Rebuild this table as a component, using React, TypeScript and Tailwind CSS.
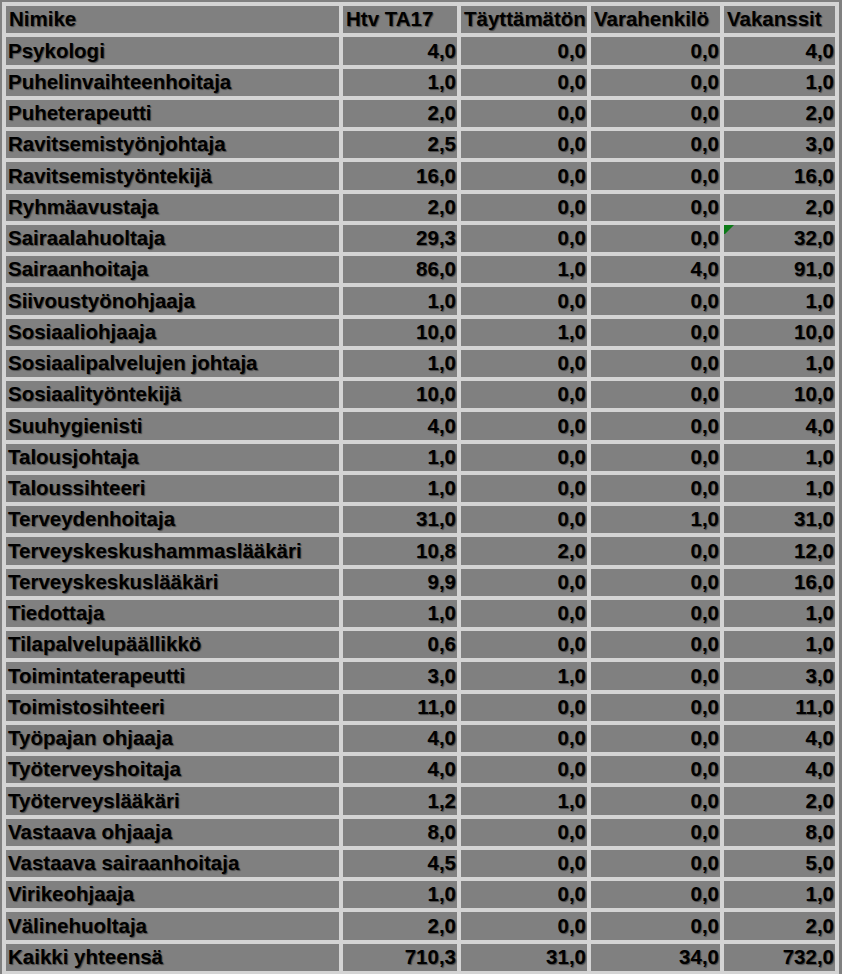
const header = ['Nimike', 'Htv TA17', 'Täyttämätön', 'Varahenkilö', 'Vakanssit'];

const rows: [string, string, string, string, string][] = [
  ['Psykologi', '4,0', '0,0', '0,0', '4,0'],
  ['Puhelinvaihteenhoitaja', '1,0', '0,0', '0,0', '1,0'],
  ['Puheterapeutti', '2,0', '0,0', '0,0', '2,0'],
  ['Ravitsemistyönjohtaja', '2,5', '0,0', '0,0', '3,0'],
  ['Ravitsemistyöntekijä', '16,0', '0,0', '0,0', '16,0'],
  ['Ryhmäavustaja', '2,0', '0,0', '0,0', '2,0'],
  ['Sairaalahuoltaja', '29,3', '0,0', '0,0', '32,0'],
  ['Sairaanhoitaja', '86,0', '1,0', '4,0', '91,0'],
  ['Siivoustyönohjaaja', '1,0', '0,0', '0,0', '1,0'],
  ['Sosiaaliohjaaja', '10,0', '1,0', '0,0', '10,0'],
  ['Sosiaalipalvelujen johtaja', '1,0', '0,0', '0,0', '1,0'],
  ['Sosiaalityöntekijä', '10,0', '0,0', '0,0', '10,0'],
  ['Suuhygienisti', '4,0', '0,0', '0,0', '4,0'],
  ['Talousjohtaja', '1,0', '0,0', '0,0', '1,0'],
  ['Taloussihteeri', '1,0', '0,0', '0,0', '1,0'],
  ['Terveydenhoitaja', '31,0', '0,0', '1,0', '31,0'],
  ['Terveyskeskushammaslääkäri', '10,8', '2,0', '0,0', '12,0'],
  ['Terveyskeskuslääkäri', '9,9', '0,0', '0,0', '16,0'],
  ['Tiedottaja', '1,0', '0,0', '0,0', '1,0'],
  ['Tilapalvelupäällikkö', '0,6', '0,0', '0,0', '1,0'],
  ['Toimintaterapeutti', '3,0', '1,0', '0,0', '3,0'],
  ['Toimistosihteeri', '11,0', '0,0', '0,0', '11,0'],
  ['Työpajan ohjaaja', '4,0', '0,0', '0,0', '4,0'],
  ['Työterveyshoitaja', '4,0', '0,0', '0,0', '4,0'],
  ['Työterveyslääkäri', '1,2', '1,0', '0,0', '2,0'],
  ['Vastaava ohjaaja', '8,0', '0,0', '0,0', '8,0'],
  ['Vastaava sairaanhoitaja', '4,5', '0,0', '0,0', '5,0'],
  ['Virikeohjaaja', '1,0', '0,0', '0,0', '1,0'],
  ['Välinehuoltaja', '2,0', '0,0', '0,0', '2,0'],
  ['Kaikki yhteensä', '710,3', '31,0', '34,0', '732,0'],
];

const cell =
  "relative flex items-center whitespace-nowrap bg-[#808080] h-[27.25px] text-[20.5px] font-bold text-black [text-shadow:1px_1px_1px_rgba(0,0,0,0.45)]";

export default function App() {
  return (
    <div
      className="h-[974px] w-[842px] overflow-hidden bg-[#808080] pl-[2px] pt-[2px]"
      style={{ fontFamily: '"Liberation Sans", Arial, sans-serif' }}
    >
      <div className="grid w-[837px] grid-cols-[333px_114px_126px_129px_111px] gap-[4px] bg-[#d4d4d4] p-[4px]">
        {header.map((h) => (
          <div key={h} className={`${cell} pl-[3px]`}>
            {h}
          </div>
        ))}
        {rows.map((r) => (
          <Row key={r[0]} r={r} />
        ))}
      </div>
    </div>
  );
}

function Row({ r }: { r: [string, string, string, string, string] }) {
  const marked = r[0] === 'Sairaalahuoltaja';
  return (
    <>
      <div className={`${cell} pl-[2px]`}>{r[0]}</div>
      {r.slice(1).map((v, i) => (
        <div key={i} className={`${cell} justify-end pr-[1px]`}>
          {marked && i === 3 && (
            <svg className="absolute left-0 top-0" width="10" height="9" viewBox="0 0 10 9">
              <path d="M0 0 L10 0 L1 9 L0 9 Z" fill="#0b7a17" />
            </svg>
          )}
          {v}
        </div>
      ))}
    </>
  );
}
